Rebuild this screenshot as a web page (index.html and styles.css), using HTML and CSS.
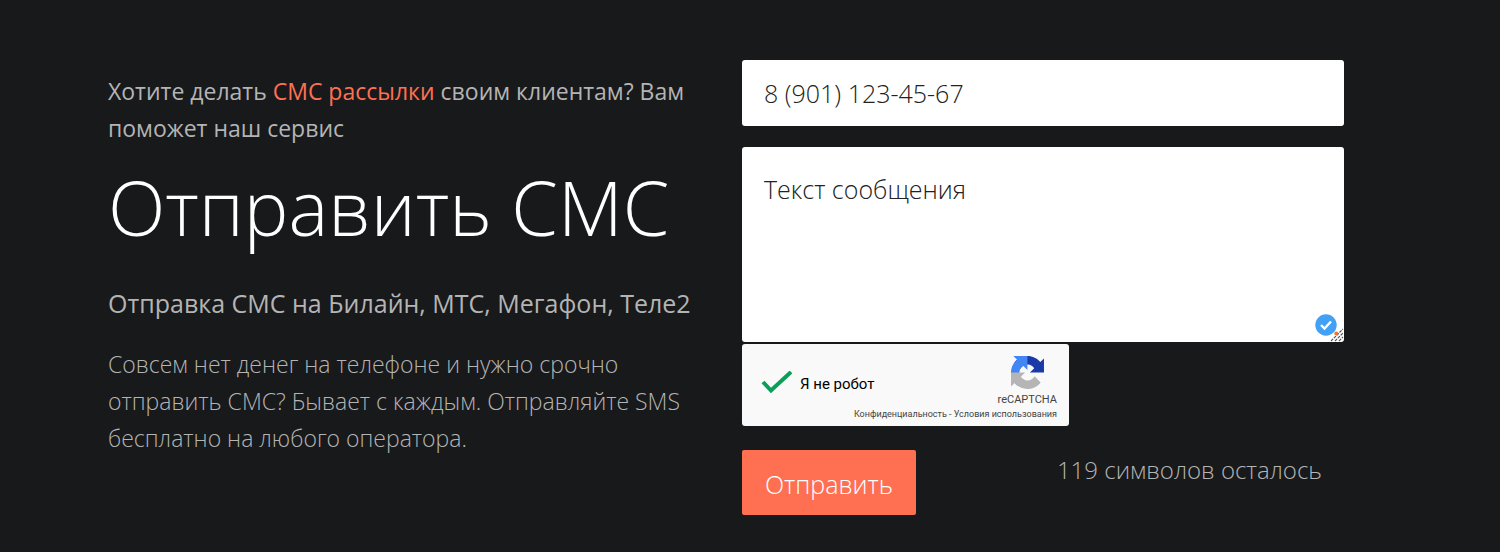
FILE: index.html
```
<!DOCTYPE html>
<html lang="ru">
<head>
    <meta charset="UTF-8">
    <meta name="viewport" content="width=device-width, initial-scale=1.0">
    <title>Отправить СМС</title>
    <link rel="stylesheet" href="styles.css">
</head>
<body>
    <main class="hero">
        <section class="intro">
            <p class="promo">Хотите делать <a href="#">СМС рассылки</a> своим клиентам? Вам поможет наш сервис</p>
            <h1>Отправить СМС</h1>
            <h2>Отправка СМС на Билайн, МТС, Мегафон, Теле2</h2>
            <p class="about">Совсем нет денег на телефоне и нужно срочно отправить СМС? Бывает с каждым. Отправляйте SMS бесплатно на любого оператора.</p>
        </section>

        <form class="sms-form">
            <input class="field" type="tel" aria-label="Номер телефона" placeholder="8 (901) 123-45-67">
            <div class="message">
                <textarea class="field" aria-label="Текст сообщения" placeholder="Текст сообщения"></textarea>
                <svg class="message-badge" width="30" height="30" viewBox="0 0 30 30" aria-hidden="true">
                    <circle cx="12" cy="13" r="10.7" fill="#42a0f5"/>
                    <path d="M7 13l3.500 3.500 6.500-7" fill="none" stroke="#fff" stroke-width="2.400"/>
                    <path d="M17 29L29 17M21 29l8-8M25 29l4-4" stroke="#555" stroke-width="1.200" stroke-dasharray="3 1"/>
                    <circle cx="22.3" cy="21.5" r="2" fill="#f4742b"/>
                </svg>
            </div>

            <!-- Captcha widget -->
            <div class="captcha">
                <label class="captcha-check">
                    <input type="checkbox" checked>
                    <svg width="32" height="26" viewBox="0 0 32 26" aria-hidden="true">
                        <path d="M3 11l8 8.500L31 1" fill="none" stroke="#0a9f58" stroke-width="4"/>
                    </svg>
                    <span>Я не робот</span>
                </label>
                <div class="captcha-brand">
                    <svg width="33" height="33" viewBox="0 0 64 64" aria-hidden="true">
                        <path d="M64 31.955l-.033-1.37V4.687l-7.16 7.16C50.948 4.674 42.033.093 32.05.093c-10.4 0-19.622 4.96-25.458 12.64l11.736 11.86a15.55 15.55 0 0 1 4.754-5.334c2.05-1.6 4.952-2.906 8.968-2.906.485 0 .86.057 1.135.163 4.976.393 9.288 3.14 11.828 7.124l-8.307 8.307L64 31.953" fill="#1c3aa7"/>
                        <path d="M31.862.094l-1.37.033H4.594l7.16 7.16C4.58 13.147 0 22.06 0 32.046c0 10.4 4.96 19.622 12.64 25.458L24.5 45.768a15.55 15.55 0 0 1-5.334-4.754c-1.6-2.05-2.906-4.952-2.906-8.968 0-.485.057-.86.163-1.135.393-4.976 3.14-9.288 7.124-11.828l8.307 8.307L31.86.095" fill="#4285f4"/>
                        <path d="M.001 32.045l.033 1.37v25.898l7.16-7.16c5.86 7.173 14.774 11.754 24.76 11.754 10.4 0 19.622-4.96 25.458-12.64l-11.736-11.86a15.55 15.55 0 0 1-4.754 5.334c-2.05 1.6-4.952 2.906-8.968 2.906-.485 0-.86-.057-1.135-.163-4.976-.393-9.288-3.14-11.828-7.124l8.307-8.307c-10.522.04-22.4.066-27.295-.005" fill="#b5b5b5"/>
                    </svg>
                    <span>reCAPTCHA</span>
                </div>
                <div class="captcha-links">
                    <a href="#">Конфиденциальность</a> - <a href="#">Условия использования</a>
                </div>
            </div>

            <div class="actions">
                <button type="submit">Отправить</button>
                <p class="counter">119 символов осталось</p>
            </div>
        </form>
    </main>
</body>
</html>
```
FILE: styles.css
```
* {
    box-sizing: border-box;
}
body {
    background-color: #18191b;
    color: #b4b4b4;
    font-family: "Segoe UI", "Open Sans", sans-serif;
    font-weight: 300;
    font-size: 23px;
    margin: 0;
}
a {
    color: inherit;
    text-decoration: none;
}
h1, h2, p {
    margin: 0;
}
.hero {
    display: grid;
    grid-template-columns: minmax(0, 1fr) minmax(0, 1fr);
    gap: 32px;
    padding: 60px 156px 36px 108px;
}
.intro {
    padding-top: 13px;
}
.promo {
    line-height: 37px;
    font-weight: 400;
}
.promo a {
    color: #ff7052;
}
h1 {
    color: #ffffff;
    font-size: 75px;
    line-height: 100px;
    font-weight: 300;
    margin-top: 10px;
    white-space: nowrap;
}
h2 {
    font-size: 25px;
    line-height: 40px;
    font-weight: 400;
    margin-top: 26px;
    white-space: nowrap;
}
.about {
    line-height: 37px;
    margin-top: 23px;
    padding-right: 24px;
}
.sms-form {
    display: flex;
    flex-direction: column;
    align-items: flex-start;
}
.field {
    display: block;
    width: 100%;
    padding: 13px 22px;
    border: none;
    border-radius: 3px;
    background-color: #ffffff;
    color: #222222;
    font: inherit;
    font-size: 25px;
    line-height: 40px;
}
.field::placeholder {
    color: #222222;
    opacity: 1;
}
.message {
    position: relative;
    width: 100%;
    margin-top: 21px;
}
textarea.field {
    height: 195px;
    padding-top: 22px;
    resize: none;
}
.message-badge {
    position: absolute;
    right: 0;
    bottom: 0;
}
.captcha {
    display: grid;
    grid-template-columns: 1fr auto;
    width: 327px;
    height: 82px;
    margin-top: 2px;
    padding: 12px 12px 6px 18px;
    border-radius: 3px;
    background-color: #f9f9f9;
    color: #444444;
    font-family: Roboto, sans-serif;
    font-weight: 400;
}
.captcha-check {
    display: flex;
    align-items: center;
    gap: 8px;
    padding-top: 4px;
    color: #000000;
    font-size: 15px;
}
.captcha-check input {
    position: absolute;
    opacity: 0;
}
.captcha-brand {
    display: flex;
    flex-direction: column;
    align-items: center;
    gap: 4px;
    font-size: 11px;
    line-height: 14px;
}
.captcha-links {
    grid-column: 1 / 3;
    font-size: 9px;
    line-height: 12px;
    text-align: right;
}
.actions {
    display: flex;
    justify-content: space-between;
    align-items: flex-start;
    width: 100%;
    margin-top: 24px;
    padding-right: 22px;
}
button {
    padding: 14px 23px 11px;
    border: none;
    border-radius: 2px;
    background-color: #ff7052;
    color: #ffffff;
    font: inherit;
    font-size: 25px;
    line-height: 40px;
    cursor: pointer;
}
button:hover {
    background-color: #ff5f3d;
}
.counter {
    font-size: 24px;
    line-height: 40px;
}
```
